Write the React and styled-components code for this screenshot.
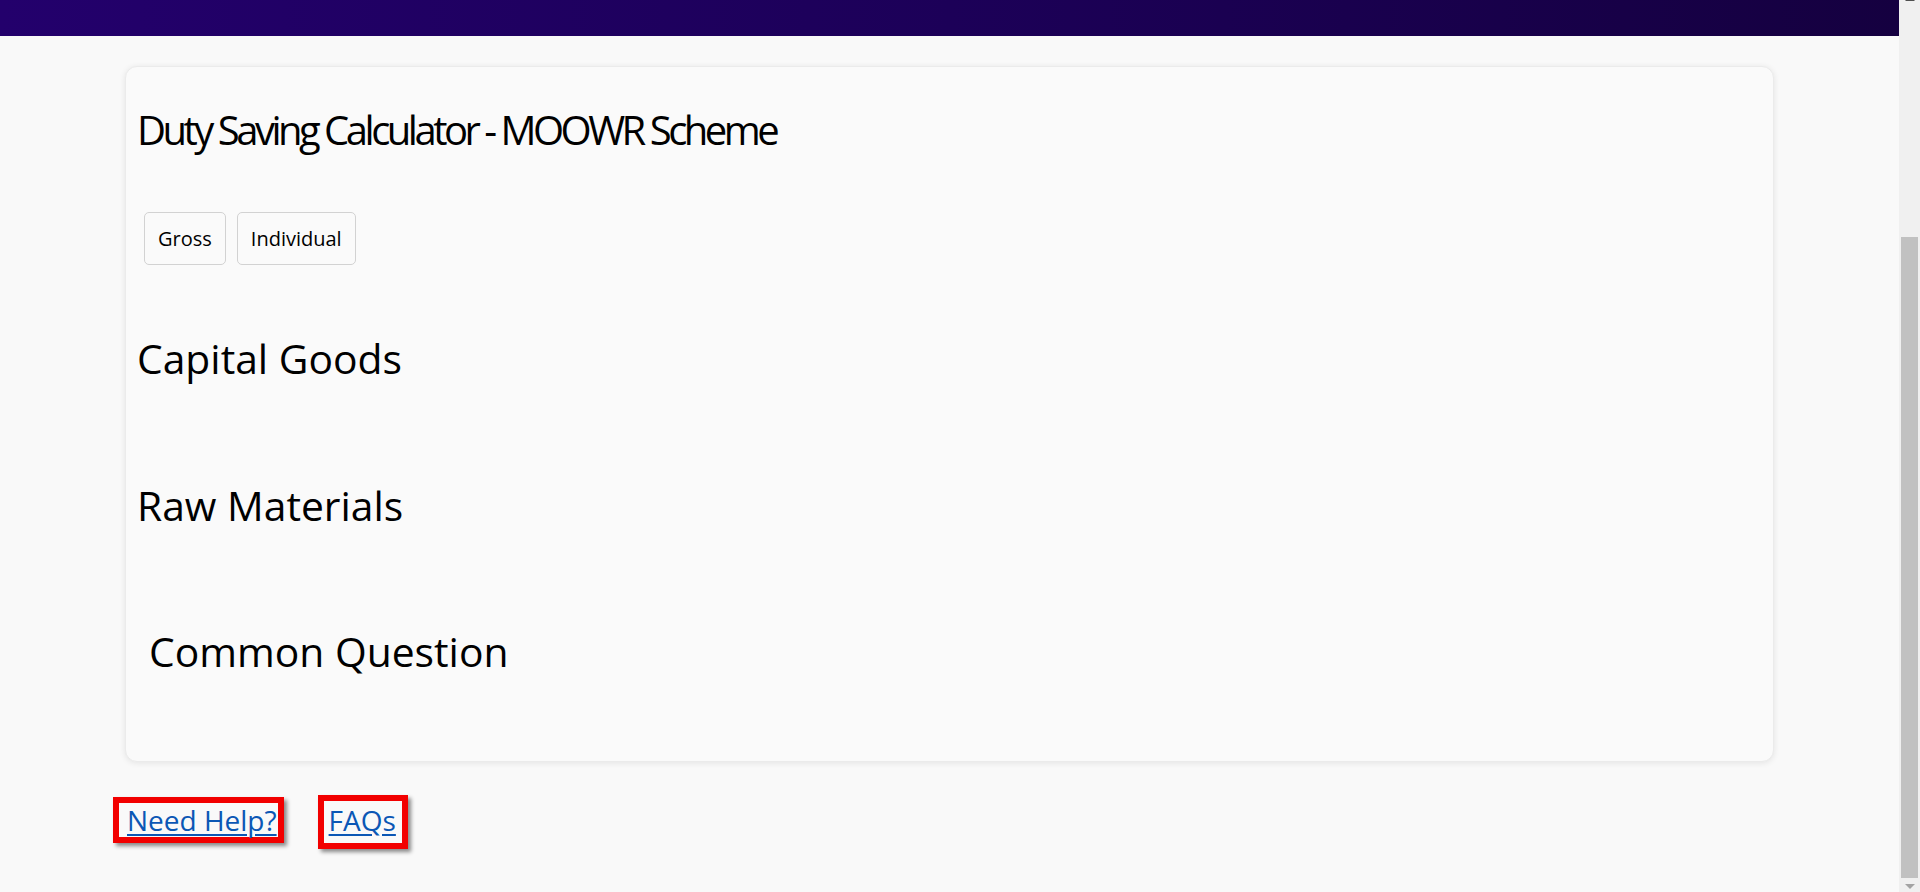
import React from "react";
import styled, { createGlobalStyle } from "styled-components";

const GlobalStyle = createGlobalStyle`
  body {
    margin: 0;
    background: #f9f9f9;
    font-family: "Open Sans", "Noto Sans", sans-serif;
    color: #000;
  }
`;

const Shell = styled.div`
  margin-right: 21px;
`;

const TopBar = styled.header`
  height: 36px;
  background: linear-gradient(90deg, #23006c 0%, #1c0058 50%, #150040 100%);
`;

const Main = styled.main`
  padding: 30px 125px 40px 113px;
`;

const Card = styled.section`
  margin-left: 12px;
  background: #fafafa;
  border: 1px solid #ebebeb;
  border-radius: 12px;
  box-shadow: 0 1px 6px rgba(0, 0, 0, 0.09);
  padding: 39px 11px 86px;
`;

const Title = styled.h1`
  margin: 0;
  font-size: 40px;
  line-height: 48px;
  font-weight: 400;
  letter-spacing: -3.5px;
`;

const Toggle = styled.div`
  display: flex;
  gap: 11px;
  margin: 58px 0 0 7px;
`;

const ToggleButton = styled.button`
  height: 53px;
  padding: 0 13px;
  background: #fafafa;
  border: 1px solid #d2d2d2;
  border-radius: 5px;
  font-family: "Open Sans", sans-serif;
  font-size: 20px;
  color: #000;
  cursor: pointer;
`;

const Heading = styled.h2`
  margin: 0;
  margin-top: ${(p) => p.$top}px;
  padding-left: ${(p) => (p.$indent ? 12 : 0)}px;
  font-size: 40.8px;
  line-height: 48px;
  font-weight: 400;
`;

const Links = styled.nav`
  display: flex;
  align-items: baseline;
  gap: 34px;
  margin-top: 33px;
`;

const HelpLink = styled.a`
  display: inline-block;
  padding: ${(p) => p.$pad};
  border: 6px solid #f20000;
  box-shadow: 3px 3px 4px rgba(0, 0, 0, 0.45);
  font-size: 28px;
  line-height: 34px;
  color: #0b57b5;
  text-decoration: underline;
  text-underline-offset: 3px;
`;

/* browser scrollbar as it shows in the capture */
const ScrollTrack = styled.aside`
  position: fixed;
  top: 0;
  right: 0;
  bottom: 0;
  width: 21px;
  background: #f0f0f0;
`;

const ScrollThumb = styled.div`
  position: absolute;
  left: 2px;
  right: 2px;
  top: 237px;
  bottom: 14px;
  background: #c1c1c1;
`;

const ScrollArrow = styled.div`
  position: absolute;
  left: 6px;
  width: 0;
  height: 0;
  border-left: 5px solid transparent;
  border-right: 5px solid transparent;
  ${(p) =>
    p.$down
      ? "bottom: 3px; border-top: 5px solid #a3a3a3;"
      : "top: -4px; border-bottom: 5px solid #505050;"}
`;

export default function App() {
  return (
    <>
      <GlobalStyle />
      <Shell>
        <TopBar />
        <Main>
          <Card>
            <Title>Duty Saving Calculator - MOOWR Scheme</Title>
            <Toggle>
              <ToggleButton type="button">Gross</ToggleButton>
              <ToggleButton type="button">Individual</ToggleButton>
            </Toggle>
            <Heading $top={69}>Capital Goods</Heading>
            <Heading $top={99}>Raw Materials</Heading>
            <Heading $top={98} $indent>
              Common Question
            </Heading>
          </Card>
          <Links>
            <HelpLink href="#" $pad="0 1px 0 8px">
              Need Help?
            </HelpLink>
            <HelpLink href="#" $pad="2px 6px 6px 5px">
              FAQs
            </HelpLink>
          </Links>
        </Main>
      </Shell>
      <ScrollTrack>
        <ScrollArrow />
        <ScrollThumb />
        <ScrollArrow $down />
      </ScrollTrack>
    </>
  );
}
